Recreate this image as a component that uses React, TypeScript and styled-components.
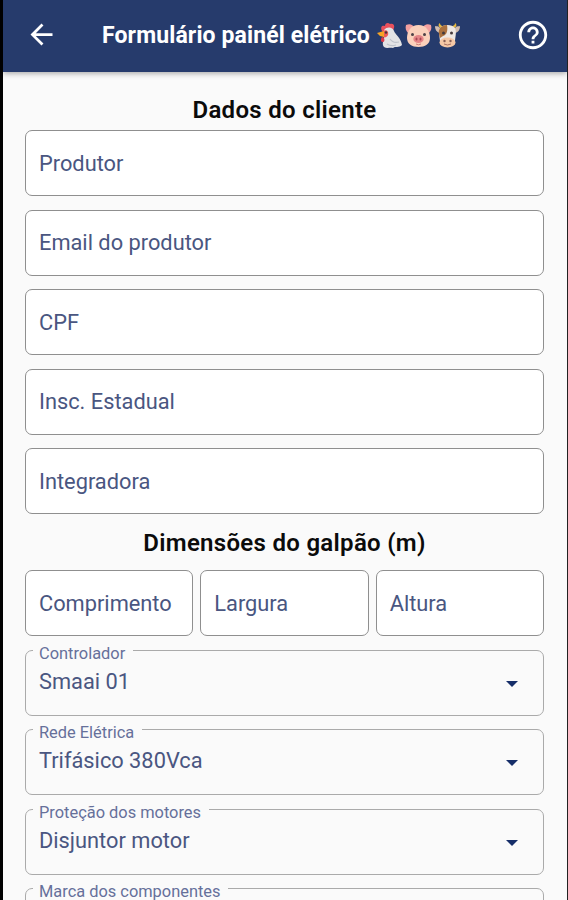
import React from "react";
import styled, { createGlobalStyle } from "styled-components";

const GlobalStyle = createGlobalStyle`
  *, *::before, *::after { box-sizing: border-box; }
  html, body { margin: 0; padding: 0; background: #000; }
  body { overflow: hidden; font-family: Roboto, "Liberation Sans", sans-serif; }
`;

const Screen = styled.main`
  width: 568px;
  height: 900px;
  overflow: hidden;
  display: flex;
  flex-direction: column;
  background: #fafafa;
  border-left: 3px solid #000;
  border-right: 1px solid #222;
`;

const AppBar = styled.header`
  flex: none;
  display: flex;
  align-items: center;
  height: 72px;
  padding: 0 17px 3px 22px;
  background: #263b6c;
  color: #fff;
  box-shadow: 0 1px 6px rgba(0, 0, 0, 0.38);
`;

const IconButton = styled.button`
  display: flex;
  flex: none;
  padding: 0;
  border: 0;
  background: none;
  color: #fff;
`;

const Title = styled.h1`
  display: flex;
  align-items: center;
  flex: 1;
  margin: 0 0 0 44px;
  padding-top: 2px;
  font-size: 23px;
  line-height: 30px;
  font-weight: 700;
  letter-spacing: 0.12px;
  white-space: nowrap;
`;

const Animals = styled.span`
  display: flex;
  gap: 2px;
  margin-left: 6px;
`;

const Form = styled.form`
  display: flex;
  flex-direction: column;
  padding: 23px 23px 0 22px;
`;

const SectionTitle = styled.h2<{ $height: number }>`
  margin: 0;
  height: ${(p) => p.$height}px;
  font-size: 24px;
  line-height: 30px;
  font-weight: 600;
  letter-spacing: 0.3px;
  text-align: center;
  color: #0b0b0b;
`;

const Stack = styled.div`
  display: flex;
  flex-direction: column;
  gap: 13.5px;
`;

const DimensionRow = styled.div`
  display: grid;
  grid-template-columns: repeat(3, 1fr);
  gap: 7px;
`;

const Field = styled.label`
  display: flex;
  align-items: center;
  height: 66px;
  padding: 1px 13px 0 13px;
  border: 1.5px solid #8f8f8f;
  border-radius: 7px;
  background: #fff;
  color: #4a5681;
  font-size: 21.8px;
  line-height: 28px;
  white-space: nowrap;
`;

const SectionGap = styled.div<{ $size: number }>`
  height: ${(p) => p.$size}px;
`;

const SelectBox = styled.fieldset`
  flex: none;
  height: 66px;
  min-width: 0;
  margin: 0;
  padding: 0 25.5px 0 5px;
  border: 1.5px solid #aaa;
  border-radius: 7px;
`;

const SelectLabel = styled.legend`
  height: 1px;
  margin-left: 2px;
  padding: 0 8px 0 6px;
`;

const SelectLabelText = styled.span`
  display: block;
  margin-top: -5px;
  font-size: 16.4px;
  line-height: 18px;
  color: #66709a;
  white-space: nowrap;
`;

const SelectValue = styled.div`
  display: flex;
  align-items: center;
  justify-content: space-between;
  height: 62px;
  padding-left: 8px;
  color: #4a5681;
  font-size: 21.8px;
  line-height: 28px;
`;

const Caret = styled.svg`
  flex: none;
  margin-top: 4px;
`;

const BackIcon = () => (
  <svg width="33" height="33" viewBox="0 0 24 24" fill="currentColor">
    <path d="M20 11H7.83l5.59-5.59L12 4l-8 8 8 8 1.41-1.41L7.83 13H20v-2z" />
  </svg>
);

const HelpIcon = () => (
  <svg width="34" height="34" viewBox="0 0 24 24" fill="currentColor">
    <path d="M11 18h2v-2h-2v2zm1-16C6.48 2 2 6.48 2 12s4.48 10 10 10 10-4.48 10-10S17.52 2 12 2zm0 18c-4.41 0-8-3.59-8-8s3.59-8 8-8 8 3.59 8 8-3.59 8-8 8zm0-14c-2.21 0-4 1.79-4 4h2c0-1.1.9-2 2-2s2 .9 2 2c0 2-3 1.75-3 5h2c0-2.25 3-2.5 3-5 0-2.21-1.79-4-4-4z" />
  </svg>
);

const Chicken = () => (
  <svg width="27" height="27" viewBox="0 0 27 27">
    <path d="M6 9C4 5 6 3 9 4c0-3 3-4 5-2 3-1 5 1 4 4l-2 5H8z" fill="#e9505c" />
    <path d="M8 8c3-4 9-3 10 1 1 3 7 7 8 14-3 3-7 1-9 3-3-1-6 1-9-1-2-3-1-5 0-8z" fill="#e3e3e5" />
    <path d="M14 17c2 3 5 4 9 3M11 22c3 2 6 2 9 1" fill="none" stroke="#bec2c9" strokeWidth="1.2" />
    <path d="M7 9c3-2 6 0 5 4-1 2-3 3-5 2z" fill="#ee5c59" />
    <path d="M1 11l7-2v6l-4-1z" fill="#f6a326" />
    <path d="M6 15c3 0 3 5 1 5s-3-2-1-5z" fill="#d9384a" />
    <circle cx="10" cy="10.5" r="1.3" fill="#46333a" />
  </svg>
);

const Pig = () => (
  <svg width="27" height="27" viewBox="0 0 27 27">
    <path d="M1 3c4-2 7 0 8 2l-6 6C1 9 0 6 1 3zM26 3c-4-2-7 0-8 2l6 6c2-2 3-5 2-8z" fill="#f4a09f" />
    <path d="M13.5 3C21 3 25 9 25 16c0 6-5 9-11.5 9S2 22 2 16C2 9 6 3 13.5 3z" fill="#fbd0bb" />
    <ellipse cx="13.5" cy="17" rx="5.2" ry="4" fill="#e58487" />
    <circle cx="7.5" cy="12.5" r="1.5" fill="#4e4147" />
    <circle cx="19.5" cy="12.5" r="1.5" fill="#4e4147" />
    <ellipse cx="11.5" cy="17" rx="1" ry="1.5" fill="#a74450" />
    <ellipse cx="15.5" cy="17" rx="1" ry="1.5" fill="#a74450" />
    <path d="M11 22q2.5 1.5 5 0" fill="none" stroke="#cb7d78" />
  </svg>
);

const Cow = () => (
  <svg width="27" height="27" viewBox="0 0 27 27">
    <path d="M7 6C4 5 4 2 6 1c0 3 3 3 5 4zM20 6c3-1 3-4 1-5 0 3-3 3-5 4z" fill="#e5b83e" />
    <path d="M7 7C4 3 2 5 1 4c0 4 2 7 6 7zM20 7c3-4 5-2 6-3 0 4-2 7-6 7z" fill="#d2bdb0" />
    <path d="M6 6c3-4 12-4 15 0 2 5 0 9 0 14H6c0-5-2-9 0-14z" fill="#eee8e3" />
    <path d="M6 6c2-2 4-3 7-3 1 5 0 10-4 11l-3 2C5 12 4 9 6 6z" fill="#ab713d" />
    <ellipse cx="13.5" cy="20.5" rx="8" ry="5" fill="#f5c8a6" />
    <circle cx="9.5" cy="11" r="1.5" fill="#453a3c" />
    <circle cx="17.5" cy="11" r="1.5" fill="#453a3c" />
    <circle cx="10.5" cy="19" r="1.2" fill="#896056" />
    <circle cx="16.5" cy="19" r="1.2" fill="#896056" />
    <path d="M10 22q3.5 2 7 0" fill="none" stroke="#a86f60" />
  </svg>
);

const clientFields = ["Produtor", "Email do produtor", "CPF", "Insc. Estadual", "Integradora"];
const dimensions = ["Comprimento", "Largura", "Altura"];
const selects = [
  { label: "Controlador", value: "Smaai 01" },
  { label: "Rede Elétrica", value: "Trifásico 380Vca" },
  { label: "Proteção dos motores", value: "Disjuntor motor" },
  { label: "Marca dos componentes", value: "" },
];

export default function App() {
  return (
    <>
      <GlobalStyle />
      <Screen>
        <AppBar>
          <IconButton aria-label="Voltar"><BackIcon /></IconButton>
          <Title>
            Formulário painél elétrico
            <Animals><Chicken /><Pig /><Cow /></Animals>
          </Title>
          <IconButton aria-label="Ajuda"><HelpIcon /></IconButton>
        </AppBar>
        <Form>
          <SectionTitle $height={35}>Dados do cliente</SectionTitle>
          <Stack>
            {clientFields.map((name) => <Field key={name}>{name}</Field>)}
          </Stack>
          <SectionGap $size={14} />
          <SectionTitle $height={42}>Dimensões do galpão (m)</SectionTitle>
          <DimensionRow>
            {dimensions.map((name) => <Field key={name}>{name}</Field>)}
          </DimensionRow>
          <SectionGap $size={13.6} />
          <Stack>
            {selects.map(({ label, value }) => (
              <SelectBox key={label}>
                <SelectLabel><SelectLabelText>{label}</SelectLabelText></SelectLabel>
                <SelectValue>
                  {value}
                  <Caret width="12" height="6" viewBox="0 0 12 6">
                    <path d="M0 0h12L6 6z" fill="#162e69" />
                  </Caret>
                </SelectValue>
              </SelectBox>
            ))}
          </Stack>
        </Form>
      </Screen>
    </>
  );
}
